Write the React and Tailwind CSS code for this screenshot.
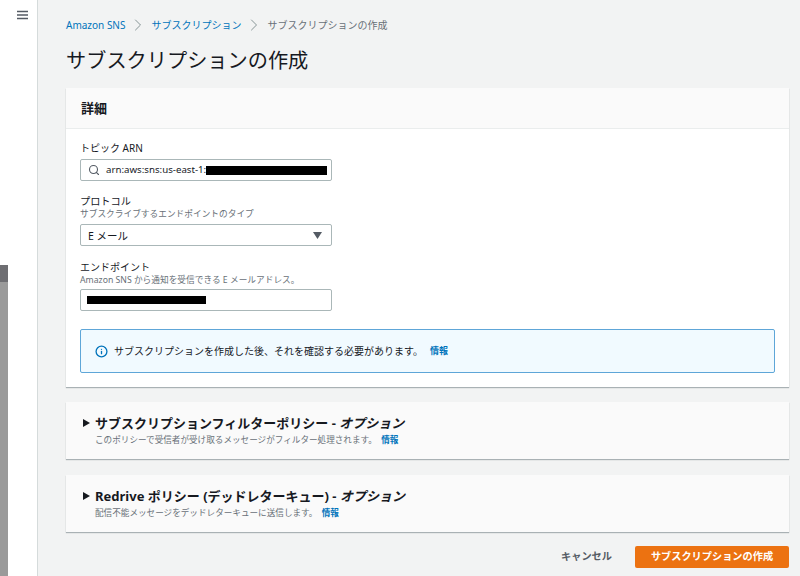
import React from 'react';
import { Search, Info, ChevronRight } from 'lucide-react';

const font = "font-['Noto_Sans','Noto_Sans_CJK_JP',sans-serif]";

const Caret = () => (
  <svg width="9" height="10" viewBox="0 0 9 10" className="shrink-0">
    <path d="M1 1 L8 5 L1 9 Z" fill="#16191f" />
  </svg>
);

const Expandable = ({ title, option, desc }) => (
  <div className="h-[57px] bg-[#fafafa] shadow-[0_1px_1px_0_rgba(0,28,36,0.3)] pl-[16px] pt-[12px]">
    <div className="flex items-center gap-[4px] h-[18px]">
      <Caret />
      <h3 className="text-[13px] leading-[18px] font-bold text-[#16191f] whitespace-nowrap">
        {title} - <span className="italic">{option}</span>
      </h3>
    </div>
    <p className="ml-[13px] mt-[1px] text-[8.6px] leading-[14px] text-[#687078] whitespace-nowrap">
      {desc} <a className="ml-[2px] font-bold text-[#0073bb]">情報</a>
    </p>
  </div>
);

export default function App() {
  return (
    <div className={`flex h-[576px] w-[800px] overflow-hidden bg-white ${font}`}>
      <aside className="w-[38px] shrink-0 bg-white border-r border-[#d5dbdb] flex flex-col">
        <div className="h-[265px] pl-[17px] pt-[10px]">
          <svg width="11" height="10" viewBox="0 0 11 10">
            <path d="M0 1.5 H11 M0 5 H11 M0 8.5 H11" stroke="#545b64" strokeWidth="1.3" />
          </svg>
        </div>
        <div className="w-[8px] h-[17px] bg-[#6e6e72]" />
        <div className="w-[8px] flex-1 bg-[#9a9a9a]" />
      </aside>

      <main className="flex-1 bg-[#f2f3f3] pl-[28px] pr-[11px]">
        <nav className="flex items-center h-[18px] mt-[16px] text-[10px] whitespace-nowrap">
          <a className="text-[#0073bb]">Amazon SNS</a>
          <ChevronRight size={20} strokeWidth={1.2} className="mx-[3px] text-[#879596]" />
          <a className="text-[#0073bb]">サブスクリプション</a>
          <ChevronRight size={20} strokeWidth={1.2} className="mx-[3px] text-[#879596]" />
          <span className="text-[#687078]">サブスクリプションの作成</span>
        </nav>

        <h1 className="mt-[10px] h-[44px] text-[20.2px] leading-[32px] text-[#16191f] whitespace-nowrap">
          サブスクリプションの作成
        </h1>

        <section className="h-[299px] bg-white shadow-[0_1px_1px_0_rgba(0,28,36,0.3)]">
          <div className="h-[41px] bg-[#fafafa] border-b border-[#eaeded] pl-[15px] pt-[1px] flex items-center">
            <h2 className="text-[13px] font-bold text-[#16191f]">詳細</h2>
          </div>

          <div className="px-[14px] pt-[11px]">
            <label className="block text-[10px] leading-[16px] text-[#16191f]">トピック ARN</label>
            <div className="mt-[3px] w-[252px] h-[22px] bg-white border border-[#aab7b8] rounded-[2px] flex items-center pl-[7px]">
              <Search size={12} strokeWidth={2.2} className="text-[#545b64] shrink-0" />
              <span className="ml-[6px] text-[9.7px] text-[#16191f] whitespace-nowrap">arn:aws:sns:us-east-1:</span>
              <span className="w-[121px] h-[9px] bg-black" />
            </div>

            <label className="block mt-[13px] text-[10.2px] leading-[15px] text-[#16191f]">プロトコル</label>
            <p className="text-[8.7px] leading-[11px] text-[#687078]">サブスクライブするエンドポイントのタイプ</p>
            <div className="mt-[4px] w-[252px] h-[22px] bg-white border border-[#aab7b8] rounded-[2px] flex items-center justify-between pl-[7px] pr-[9px]">
              <span className="text-[10.5px] leading-[16px] pt-[1px] text-[#16191f]">E メール</span>
              <svg width="9" height="7" viewBox="0 0 9 7">
                <path d="M0 0 H9 L4.5 7 Z" fill="#545b64" />
              </svg>
            </div>

            <label className="block mt-[14px] text-[10px] leading-[15px] text-[#16191f]">エンドポイント</label>
            <p className="text-[8.7px] leading-[11px] text-[#687078] whitespace-nowrap">Amazon SNS から通知を受信できる E メールアドレス。</p>
            <div className="mt-[3px] w-[252px] h-[22px] bg-white border border-[#aab7b8] rounded-[2px] flex items-center pl-[6px]">
              <span className="w-[119px] h-[8px] bg-black" />
            </div>

            <div className="mt-[18px] h-[44px] bg-[#f1faff] border border-[#5ea6d8] rounded-[2px] flex items-center pl-[14px]">
              <Info size={13} strokeWidth={2.4} className="text-[#0073bb] shrink-0" />
              <span className="ml-[6px] text-[10px] text-[#16191f] whitespace-nowrap">サブスクリプションを作成した後、それを確認する必要があります。</span>
              <a className="ml-[7px] text-[9px] font-bold text-[#0073bb]">情報</a>
            </div>
          </div>
        </section>

        <div className="mt-[15px] flex flex-col gap-[16px]">
          <Expandable
            title="サブスクリプションフィルターポリシー"
            option="オプション"
            desc="このポリシーで受信者が受け取るメッセージがフィルター処理されます。"
          />
          <Expandable
            title="Redrive ポリシー (デッドレターキュー)"
            option="オプション"
            desc="配信不能メッセージをデッドレターキューに送信します。"
          />
        </div>

        <div className="mt-[14px] flex items-center justify-end">
          <button className="text-[10.2px] font-bold text-[#545b64]">キャンセル</button>
          <button className="ml-[23px] w-[154px] h-[22px] bg-[#ec7211] rounded-[2px] text-[10.2px] font-bold text-white">
            サブスクリプションの作成
          </button>
        </div>
      </main>
    </div>
  );
}
